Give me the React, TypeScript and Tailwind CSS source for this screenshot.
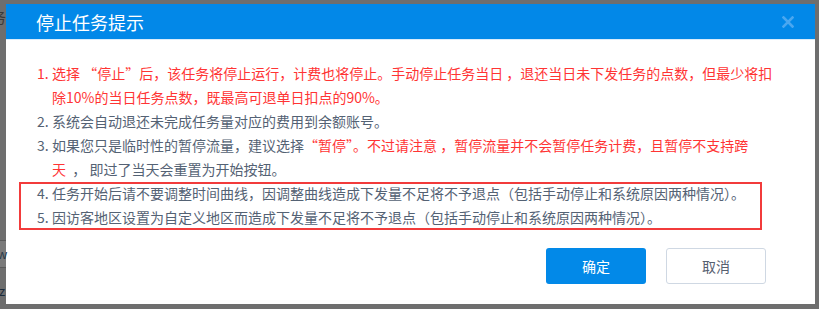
import React from "react";

const FONT = { fontFamily: '"Microsoft YaHei", "Noto Sans CJK SC", "Noto Sans", sans-serif' };

function Item({ n, children }: { n: string; children: React.ReactNode }) {
  return (
    <div className="flex">
      <span className="w-[15px] shrink-0">{n}</span>
      <div className="whitespace-nowrap">{children}</div>
    </div>
  );
}

export default function App() {
  const red = "text-[#ff3434]";
  return (
    <div
      className="relative w-[819px] h-[309px] overflow-hidden bg-[#6e6e6e] pt-[4px] pl-[6px]"
      style={FONT}
    >
      {/* dimmed page behind */}
      <span className="absolute left-[-9px] top-[6px] text-[15px] text-[#3a3a3a]">务</span>
      <div className="absolute left-0 top-[240px] w-[6px] h-[28px] bg-[#7a7a7a] border-y border-[#5a5a5a]" />
      <span className="absolute left-[-3px] top-[244px] text-[13px] text-[#2a3a4a]">w</span>
      <span className="absolute left-[-1px] top-[281px] text-[13px] text-[#1a2a3a]">z</span>

      <div className="w-[809px] h-[300px] bg-white flex flex-col">
        {/* header */}
        <div className="h-[36px] bg-[#0288e8] border-b border-[#d9ecfb] flex items-center justify-between pl-[30px] pr-[21px]">
          <span className="text-white text-[18px] leading-none">停止任务提示</span>
          <svg width="12" height="12" viewBox="0 0 12 12" className="mt-[1px]">
            <path d="M1.5 1.5 L10.5 10.5 M10.5 1.5 L1.5 10.5" stroke="#4aa7f0" strokeWidth="2.6" strokeLinecap="square" />
          </svg>
        </div>

        {/* body */}
        <div className="pt-[21px] pl-[31px] text-[14px] leading-[24px] text-[#546274]">
          <div className={red}>
            <Item n="1.">
              选择&nbsp;“停止”后，该任务将停止运行，计费也将停止。手动停止任务当日&nbsp;，退还当日未下发任务的点数，但最少将扣
              <br />
              除10%的当日任务点数，既最高可退单日扣点的90%。
            </Item>
          </div>
          <Item n="2.">系统会自动退还未完成任务量对应的费用到余额账号。</Item>
          <Item n="3.">
            如果您只是临时性的暂停流量，建议选择<span className={red}>“暂停”。不过请注意&nbsp;，暂停流量并不会暂停任务计费，且暂停不支持跨</span>
            <br />
            <span className={red}>天</span>&nbsp;&nbsp;，&nbsp;即过了当天会重置为开始按钮。
          </Item>
          <div className="relative">
            <Item n="4.">任务开始后请不要调整时间曲线，因调整曲线造成下发量不足将不予退点（包括手动停止和系统原因两种情况）。</Item>
            <Item n="5.">因访客地区设置为自定义地区而造成下发量不足将不予退点（包括手动停止和系统原因两种情况）。</Item>
            <div className="absolute left-[-18px] top-[1px] w-[743px] h-[48px] border-2 border-[#f23b3b] pointer-events-none" />
          </div>
        </div>

        {/* footer */}
        <div className="flex justify-end gap-[20px] pr-[49px] mt-[19px]">
          <button className="w-[100px] h-[36px] rounded-[3px] bg-[#0289e8] text-white text-[14px]">确定</button>
          <button className="w-[100px] h-[36px] rounded-[3px] bg-white border border-[#cfd8e3] text-[#566070] text-[14px]">取消</button>
        </div>
      </div>
    </div>
  );
}
